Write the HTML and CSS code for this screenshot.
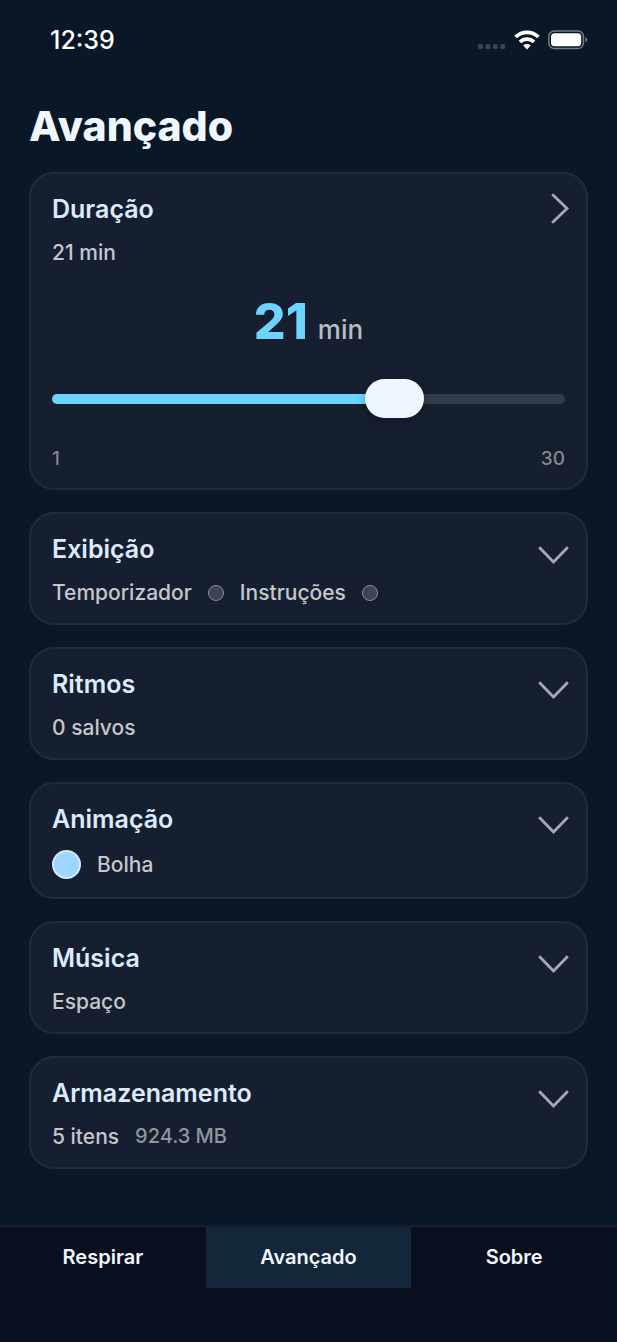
FILE: index.html
```html
<!doctype html>
<html lang="pt-BR">
  <head>
    <meta charset="UTF-8" />
    <meta name="viewport" content="width=device-width, initial-scale=1" />
    <title>Avançado</title>
    <link rel="stylesheet" href="styles.css" />
  </head>
  <body>
    <header class="status-bar">
      <span class="status-time">12:39</span>
      <div class="status-icons">
        <svg class="icon-signal" width="28" height="20" viewBox="0 0 28 20">
          <rect x="0" y="14" width="5" height="5" rx="1.5" />
          <rect x="7.4" y="14" width="5" height="5" rx="1.5" />
          <rect x="14.8" y="14" width="5" height="5" rx="1.5" />
          <rect x="22.2" y="14" width="5" height="5" rx="1.5" />
        </svg>
        <svg class="icon-wifi" width="26" height="20" viewBox="0 0 26 20">
          <path d="M1.6 7a16.3 16.3 0 0 1 22.8 0" />
          <path d="M6 12a10 10 0 0 1 14 0" />
          <path class="wifi-dot" d="M13 19.5l-3.8-3.9a5.6 5.6 0 0 1 7.6 0z" />
        </svg>
        <svg class="icon-battery" width="40" height="20" viewBox="0 0 40 20">
          <rect class="battery-case" x="0.8" y="1" width="34.6" height="17.6" rx="5.5" />
          <rect class="battery-level" x="3" y="3.3" width="30.2" height="13" rx="3.6" />
          <path class="battery-cap" d="M37.4 7.3c2.6 1 2.6 4 0 5z" />
        </svg>
      </div>
    </header>

    <main class="content">
      <h1>Avançado</h1>

      <section class="card">
        <button class="card-header" aria-expanded="true">
          <span class="card-title">Duração</span>
          <svg class="chevron" width="18" height="31" viewBox="0 0 18 31">
            <path d="M1.2 1.2L16 15.5L1.2 29.8" />
          </svg>
        </button>
        <div class="card-summary">21 min</div>
        <div class="duration">
          <span class="duration-value">21</span>
          <span class="duration-unit">min</span>
        </div>
        <input
          class="slider"
          type="range"
          min="1"
          max="30"
          value="21"
          aria-label="Duração em minutos"
        />
        <div class="slider-limits">
          <span>1</span>
          <span>30</span>
        </div>
      </section>

      <section class="card">
        <button class="card-header" aria-expanded="false">
          <span class="card-title">Exibição</span>
          <svg class="chevron" width="31" height="18" viewBox="0 0 31 18">
            <path d="M1.2 1.2L15.5 16L29.8 1.2" />
          </svg>
        </button>
        <div class="card-summary">
          <span>Temporizador</span>
          <span class="indicator"></span>
          <span>Instruções</span>
          <span class="indicator"></span>
        </div>
      </section>

      <section class="card">
        <button class="card-header" aria-expanded="false">
          <span class="card-title">Ritmos</span>
          <svg class="chevron" width="31" height="18" viewBox="0 0 31 18">
            <path d="M1.2 1.2L15.5 16L29.8 1.2" />
          </svg>
        </button>
        <div class="card-summary">0 salvos</div>
      </section>

      <section class="card">
        <button class="card-header" aria-expanded="false">
          <span class="card-title">Animação</span>
          <svg class="chevron" width="31" height="18" viewBox="0 0 31 18">
            <path d="M1.2 1.2L15.5 16L29.8 1.2" />
          </svg>
        </button>
        <div class="card-summary">
          <span class="bubble"></span>
          <span>Bolha</span>
        </div>
      </section>

      <section class="card">
        <button class="card-header" aria-expanded="false">
          <span class="card-title">Música</span>
          <svg class="chevron" width="31" height="18" viewBox="0 0 31 18">
            <path d="M1.2 1.2L15.5 16L29.8 1.2" />
          </svg>
        </button>
        <div class="card-summary">Espaço</div>
      </section>

      <section class="card">
        <button class="card-header" aria-expanded="false">
          <span class="card-title">Armazenamento</span>
          <svg class="chevron" width="31" height="18" viewBox="0 0 31 18">
            <path d="M1.2 1.2L15.5 16L29.8 1.2" />
          </svg>
        </button>
        <div class="card-summary">
          <span>5 itens</span>
          <span class="storage-size">924.3 MB</span>
        </div>
      </section>
    </main>

    <nav class="tab-bar">
      <a class="tab" href="#respirar">Respirar</a>
      <a class="tab active" href="#avancado" aria-current="page">Avançado</a>
      <a class="tab" href="#sobre">Sobre</a>
    </nav>
  </body>
</html>
```

FILE: styles.css
```css
* {
  box-sizing: border-box;
}

body {
  display: flex;
  flex-direction: column;
  min-height: 100vh;
  margin: 0;
  font-family: Inter, "Liberation Sans", sans-serif;
  background-color: #0a1726;
  color: #f0f6ff;
}

/* Status bar */
.status-bar {
  display: flex;
  align-items: center;
  justify-content: space-between;
  height: 79px;
  padding: 0 29px 0 50px;
}

.status-time {
  color: #fff;
  font-size: 25px;
  font-weight: 500;
}

.status-icons {
  display: flex;
  align-items: center;
  gap: 8px;
}

.icon-signal {
  fill: #3b4551;
}

.icon-wifi {
  fill: none;
  stroke: #fff;
  stroke-width: 3.8;
}

.wifi-dot {
  fill: #fff;
  stroke: none;
}

.battery-case {
  fill: none;
  stroke: #757c86;
  stroke-width: 1.5;
}

.battery-level {
  fill: #fff;
}

.battery-cap {
  fill: #757c86;
}

/* Settings cards */
.content {
  flex: 1;
  display: flex;
  flex-direction: column;
  gap: 22px;
  padding: 23px 29px;
}

h1 {
  margin: 0;
  font-size: 41px;
  line-height: 48px;
  font-weight: 800;
}

.card {
  padding: 20px 21px 18px;
  background: #161f2f;
  border: 2px solid #212b3a;
  border-radius: 25px;
}

.card-header {
  display: flex;
  align-items: flex-end;
  justify-content: space-between;
  width: calc(100% + 4px);
  height: 30px;
  padding: 0;
  background: none;
  border: none;
  color: #dcebfc;
  font: inherit;
  cursor: pointer;
}

.card-title {
  font-size: 25px;
  line-height: 30px;
  font-weight: 600;
}

.chevron {
  fill: none;
  stroke: #a5a9b0;
  stroke-width: 2.8;
}

.card-summary {
  display: flex;
  align-items: center;
  gap: 16px;
  margin-top: 16px;
  color: #c5c7cb;
  font-size: 21px;
  line-height: 25px;
  font-weight: 500;
}

.indicator {
  width: 16px;
  height: 16px;
  background: #3e4552;
  border: 1px solid #8a8f97;
  border-radius: 50%;
}

.bubble {
  width: 29px;
  height: 29px;
  background: #9fd5ff;
  border: 2px solid #d0eaff;
  border-radius: 50%;
}

.storage-size {
  color: #91959c;
  font-size: 20px;
}

/* Duration slider */
.duration {
  display: flex;
  align-items: baseline;
  justify-content: center;
  gap: 10px;
  margin-top: 26px;
  line-height: 60px;
}

.duration-value {
  color: #6cd4ff;
  font-size: 50px;
  font-weight: 800;
}

.duration-unit {
  color: #b9bcc1;
  font-size: 26px;
  font-weight: 500;
}

.slider {
  -webkit-appearance: none;
  appearance: none;
  display: block;
  width: 100%;
  height: 39px;
  margin: 19px 0 30px;
  background: none;
  cursor: pointer;
}

.slider::-webkit-slider-runnable-track {
  height: 10px;
  background: linear-gradient(to right, #6cd4ff 67%, #323b49 67%);
  border-radius: 5px;
}

.slider::-webkit-slider-thumb {
  -webkit-appearance: none;
  width: 59px;
  height: 39px;
  margin-top: -15px;
  background: #eff6ff;
  border-radius: 20px;
  box-shadow: 0 2px 10px rgba(0, 0, 0, 0.25);
}

.slider-limits {
  display: flex;
  justify-content: space-between;
  color: #848992;
  font-size: 19px;
  line-height: 22px;
  font-weight: 500;
}

/* Bottom tabs */
.tab-bar {
  display: flex;
  padding-bottom: 54px;
  background: #090f1e;
  border-top: 2px solid #151e2d;
}

.tab {
  flex: 1;
  color: #f0f6ff;
  font-size: 20px;
  line-height: 61px;
  font-weight: 600;
  text-align: center;
  text-decoration: none;
}

.tab.active {
  background: #14273a;
}
```
